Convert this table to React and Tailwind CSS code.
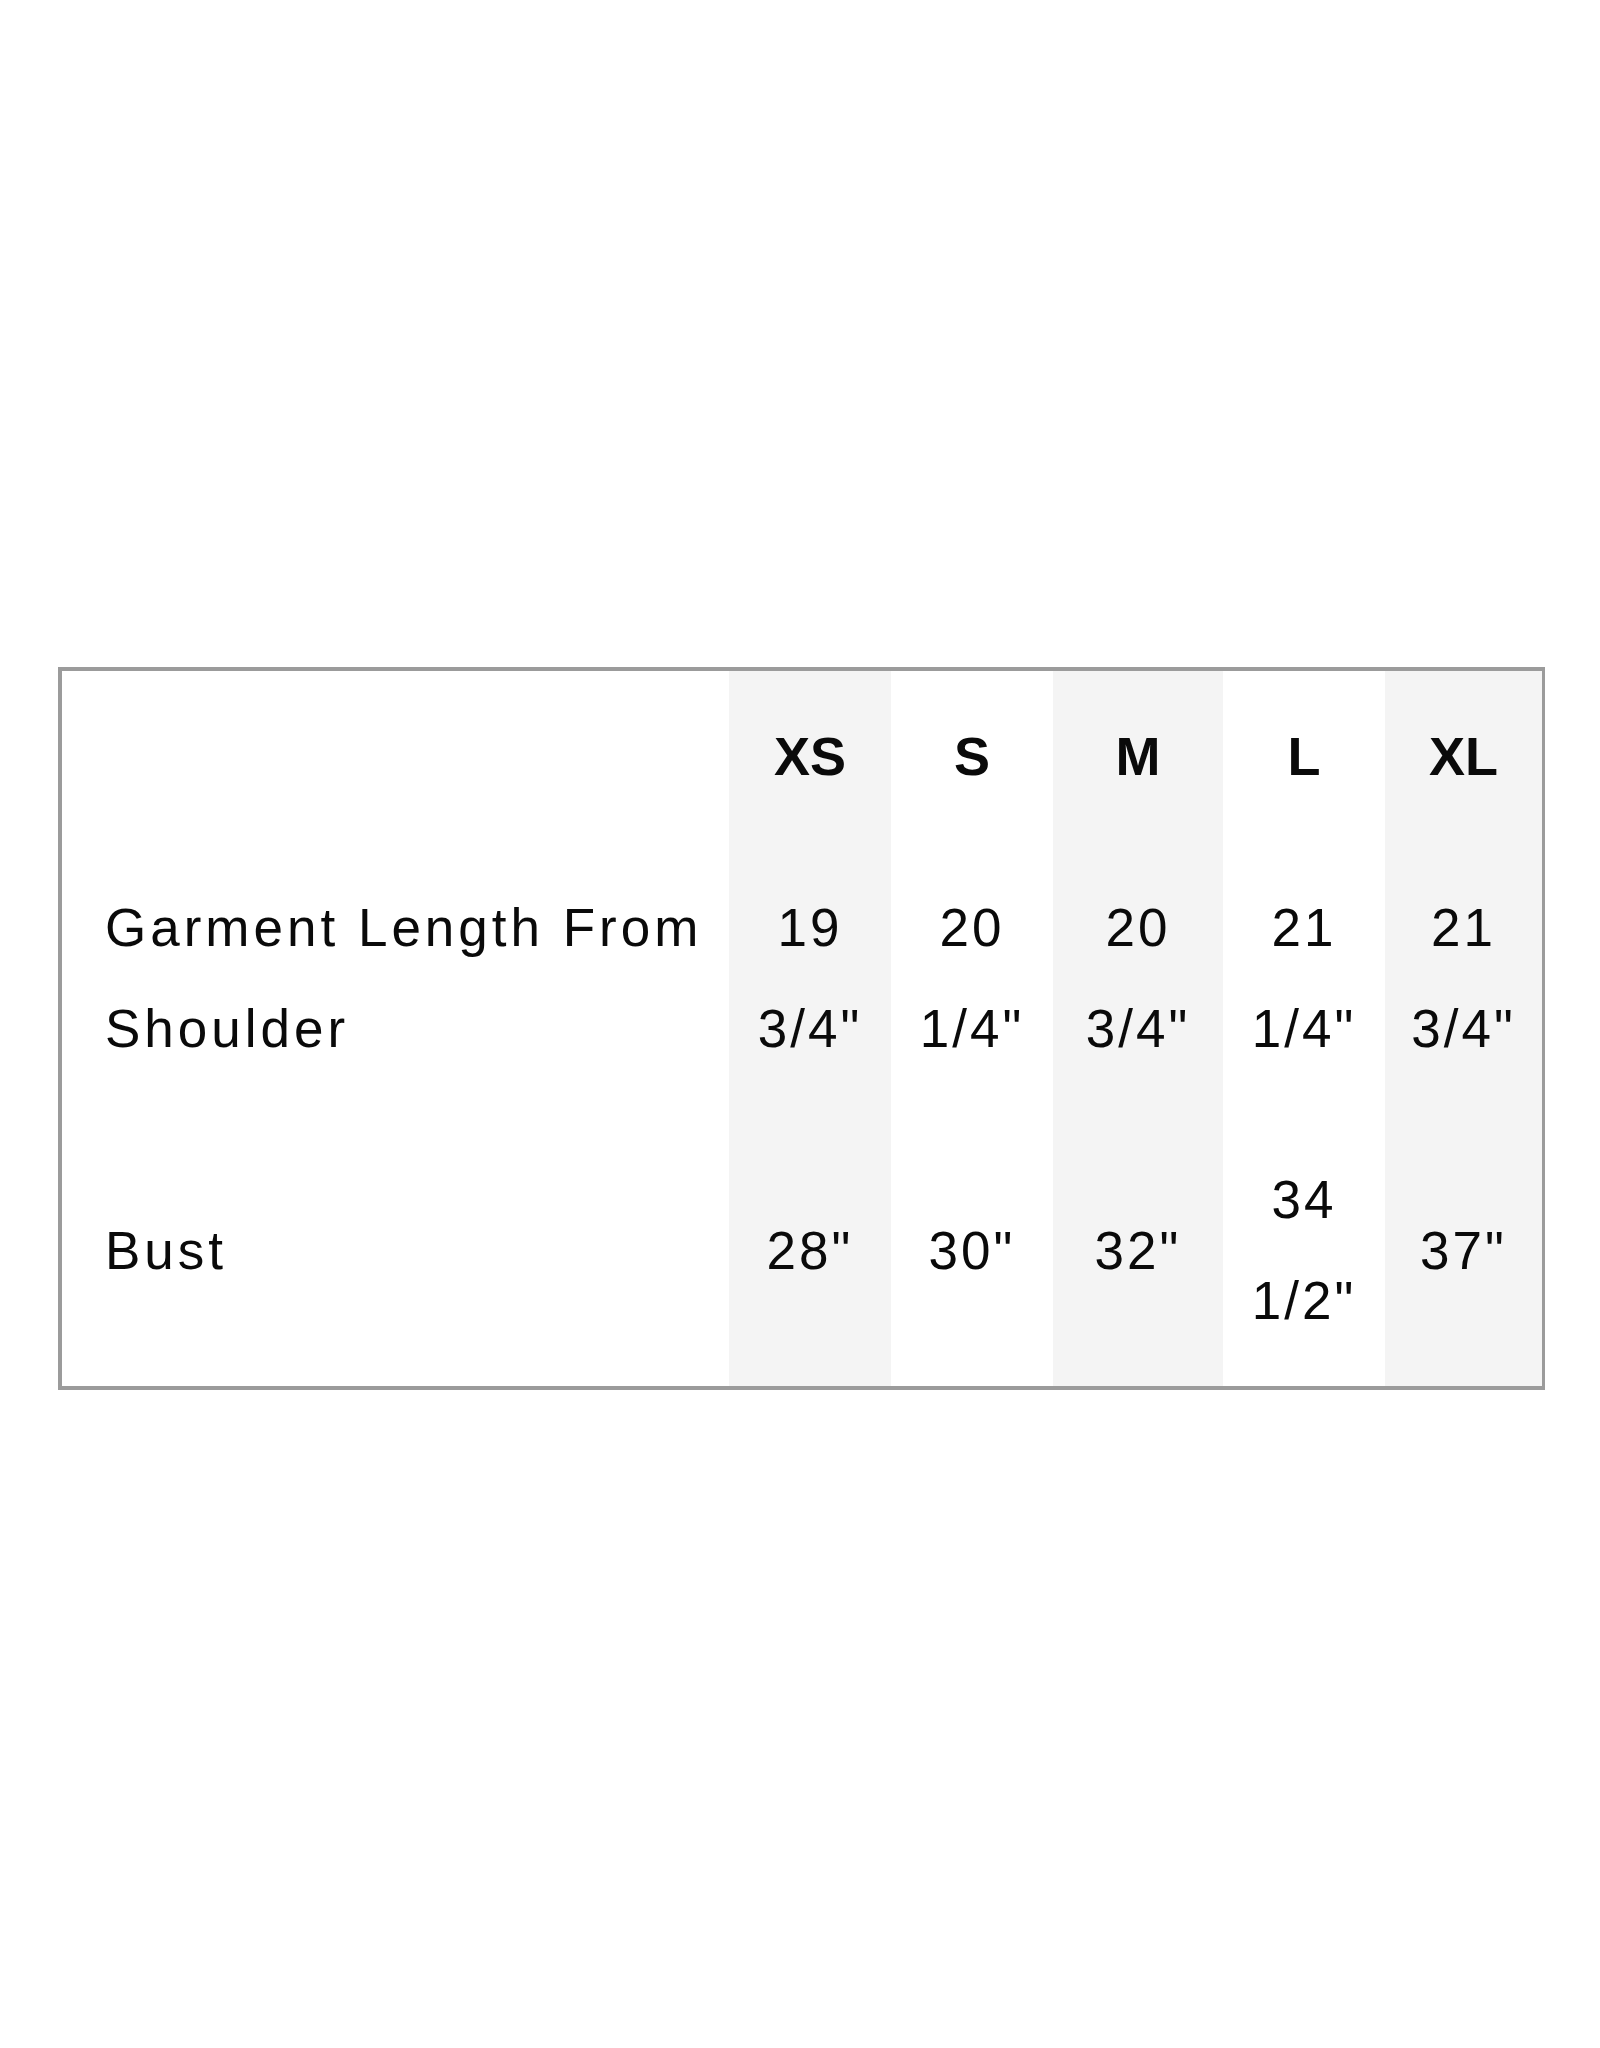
import React from 'react';

const sizes = ['XS', 'S', 'M', 'L', 'XL'];

const rows = [
  { label: 'Garment Length From Shoulder', values: ['19 3/4"', '20 1/4"', '20 3/4"', '21 1/4"', '21 3/4"'] },
  { label: 'Bust', values: ['28"', '30"', '32"', '34 1/2"', '37"'] },
];

// column widths measured off the chart
const colWidths = ['w-[667px]', 'w-[162px]', 'w-[162px]', 'w-[170px]', 'w-[162px]', 'w-[157px]'];

const SizeChart = () => {
  const shade = (i) => (i % 2 === 0 ? 'bg-[#f4f4f4]' : 'bg-white');

  return (
    <div className="w-[1487px] border-4 border-[#9b9b9b] bg-white">
      <table className="w-full table-fixed border-collapse text-[#0a0a0a]">
        <colgroup>
          {colWidths.map((w, i) => (
            <col key={i} className={w} />
          ))}
        </colgroup>
        <thead>
          <tr>
            <th className="py-[35px]" />
            {sizes.map((size, i) => (
              <th
                key={size}
                className={`${shade(i)} py-[35px] text-center align-middle text-[54px] font-bold leading-[101px]`}
              >
                {size}
              </th>
            ))}
          </tr>
        </thead>
        <tbody>
          {rows.map((row) => (
            <tr key={row.label}>
              <td className="py-[35px] pl-[43px] pr-4 text-left align-middle text-[53px] leading-[101px] tracking-[4px]">
                {row.label}
              </td>
              {row.values.map((value, i) => (
                <td
                  key={i}
                  className={`${shade(i)} py-[35px] text-center align-middle text-[53px] leading-[101px] tracking-[3px]`}
                >
                  {value}
                </td>
              ))}
            </tr>
          ))}
        </tbody>
      </table>
    </div>
  );
};

export default function App() {
  return (
    <div className="min-h-[2048px] w-[1600px] bg-white pl-[58px] pt-[667px] font-['Liberation_Sans',Arial,sans-serif]">
      <SizeChart />
    </div>
  );
}
